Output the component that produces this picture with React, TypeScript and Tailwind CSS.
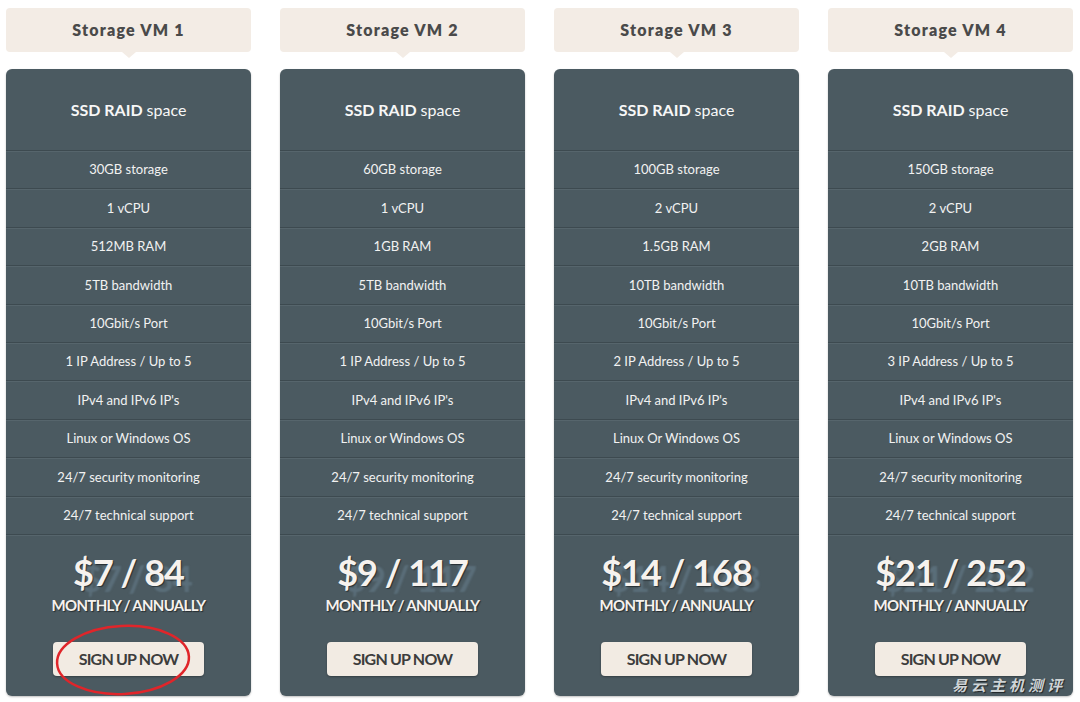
import React from "react";

type Plan = {
  name: string;
  features: string[];
  monthly: string;
  annual: string;
};

const PLANS: Plan[] = [
  {
    name: "Storage VM 1",
    features: ["30GB storage", "1 vCPU", "512MB RAM", "5TB bandwidth", "10Gbit/s Port", "1 IP Address / Up to 5", "IPv4 and IPv6 IP's", "Linux or Windows OS", "24/7 security monitoring", "24/7 technical support"],
    monthly: "7",
    annual: "84",
  },
  {
    name: "Storage VM 2",
    features: ["60GB storage", "1 vCPU", "1GB RAM", "5TB bandwidth", "10Gbit/s Port", "1 IP Address / Up to 5", "IPv4 and IPv6 IP's", "Linux or Windows OS", "24/7 security monitoring", "24/7 technical support"],
    monthly: "9",
    annual: "117",
  },
  {
    name: "Storage VM 3",
    features: ["100GB storage", "2 vCPU", "1.5GB RAM", "10TB bandwidth", "10Gbit/s Port", "2 IP Address / Up to 5", "IPv4 and IPv6 IP's", "Linux Or Windows OS", "24/7 security monitoring", "24/7 technical support"],
    monthly: "14",
    annual: "168",
  },
  {
    name: "Storage VM 4",
    features: ["150GB storage", "2 vCPU", "2GB RAM", "10TB bandwidth", "10Gbit/s Port", "3 IP Address / Up to 5", "IPv4 and IPv6 IP's", "Linux or Windows OS", "24/7 security monitoring", "24/7 technical support"],
    monthly: "21",
    annual: "252",
  },
];

function PlanColumn({ plan, circled }: { plan: Plan; circled?: boolean }): React.JSX.Element {
  return (
    <div className="flex w-[245px] flex-col">
      {/* タイトル */}
      <div className="relative mt-2 flex h-[44px] items-center justify-center rounded-[4px] bg-[#f3ece5]">
        <span className="text-[16px] font-extrabold tracking-[1.2px] text-[#4a4a4a]">{plan.name}</span>
        <span className="absolute -bottom-[6px] left-1/2 h-0 w-0 -translate-x-1/2 border-x-[7px] border-t-[6px] border-x-transparent border-t-[#f3ece5]" />
      </div>

      {/* カード */}
      <div className="mt-[17px] flex h-[627px] flex-col rounded-[6px] bg-[#4b5a61] shadow-[0_1px_2px_rgba(0,0,0,0.25)]">
        <div className="flex h-[81px] items-center justify-center text-[16px] text-[#f7f7f7]">
          <span className="font-bold">SSD RAID</span>
          <span className="ml-[4px]">space</span>
        </div>
        <div className="border-b border-[#3d4a50] shadow-[0_1px_0_#56656c]">
          {plan.features.map((f) => (
            <div
              key={f}
              className="flex h-[38.4px] items-center justify-center border-t border-[#3d4a50] pt-[1px] text-[13px] text-[#f2f2f2] shadow-[inset_0_1px_0_#56656c]"
            >
              {f}
            </div>
          ))}
        </div>

        {/* 価格 */}
        <div className="flex flex-col items-center pt-[17px]">
          <div className="text-[36px] leading-[40px] font-bold tracking-[-1px] text-[#f6f2ee] [text-shadow:1px_1px_1px_rgba(0,0,0,0.5),8px_6px_2px_rgba(120,150,170,0.35)]">
            ${plan.monthly} / {plan.annual}
          </div>
          <div className="mt-[4px] text-[15px] leading-[18px] font-bold tracking-[-0.7px] text-[#f6f2ee] [text-shadow:1px_1px_1px_rgba(0,0,0,0.5)]">
            MONTHLY / ANNUALLY
          </div>
          <div className="relative mt-[28px]">
            <button
              type="button"
              className="flex h-[34px] w-[151px] items-center justify-center rounded-[4px] bg-[#f2ebe3] text-[16px] font-bold tracking-[-0.8px] text-[#3d3d3d] shadow-[0_1px_2px_rgba(0,0,0,0.3)]"
            >
              SIGN UP NOW
            </button>
            {circled && (
              <svg className="pointer-events-none absolute -top-[19px] left-[0px]" width="140" height="74" viewBox="0 0 140 74">
                <ellipse cx="70" cy="37" rx="66" ry="34" fill="none" stroke="#e0252a" strokeWidth="2.5" transform="rotate(-3 70 37)" />
              </svg>
            )}
          </div>
        </div>
      </div>
    </div>
  );
}

export default function App(): React.JSX.Element {
  return (
    <div className="relative h-[702px] w-[1080px] overflow-hidden bg-white font-['Lato','Noto_Sans','Noto_Sans_CJK_SC',sans-serif]">
      <div className="flex gap-[29px] px-[6px]">
        {PLANS.map((p, i) => (
          <PlanColumn key={p.name} plan={p} circled={i === 0} />
        ))}
      </div>
      {/* ウォーターマーク */}
      <div className="absolute right-[14px] bottom-[6px] text-[15px] font-bold tracking-[4px] text-[#cfd4d6] italic [font-family:'Noto_Sans_CJK_SC',sans-serif] [text-shadow:1px_1px_1px_rgba(0,0,0,0.6)]">
        易云主机测评
      </div>
    </div>
  );
}
